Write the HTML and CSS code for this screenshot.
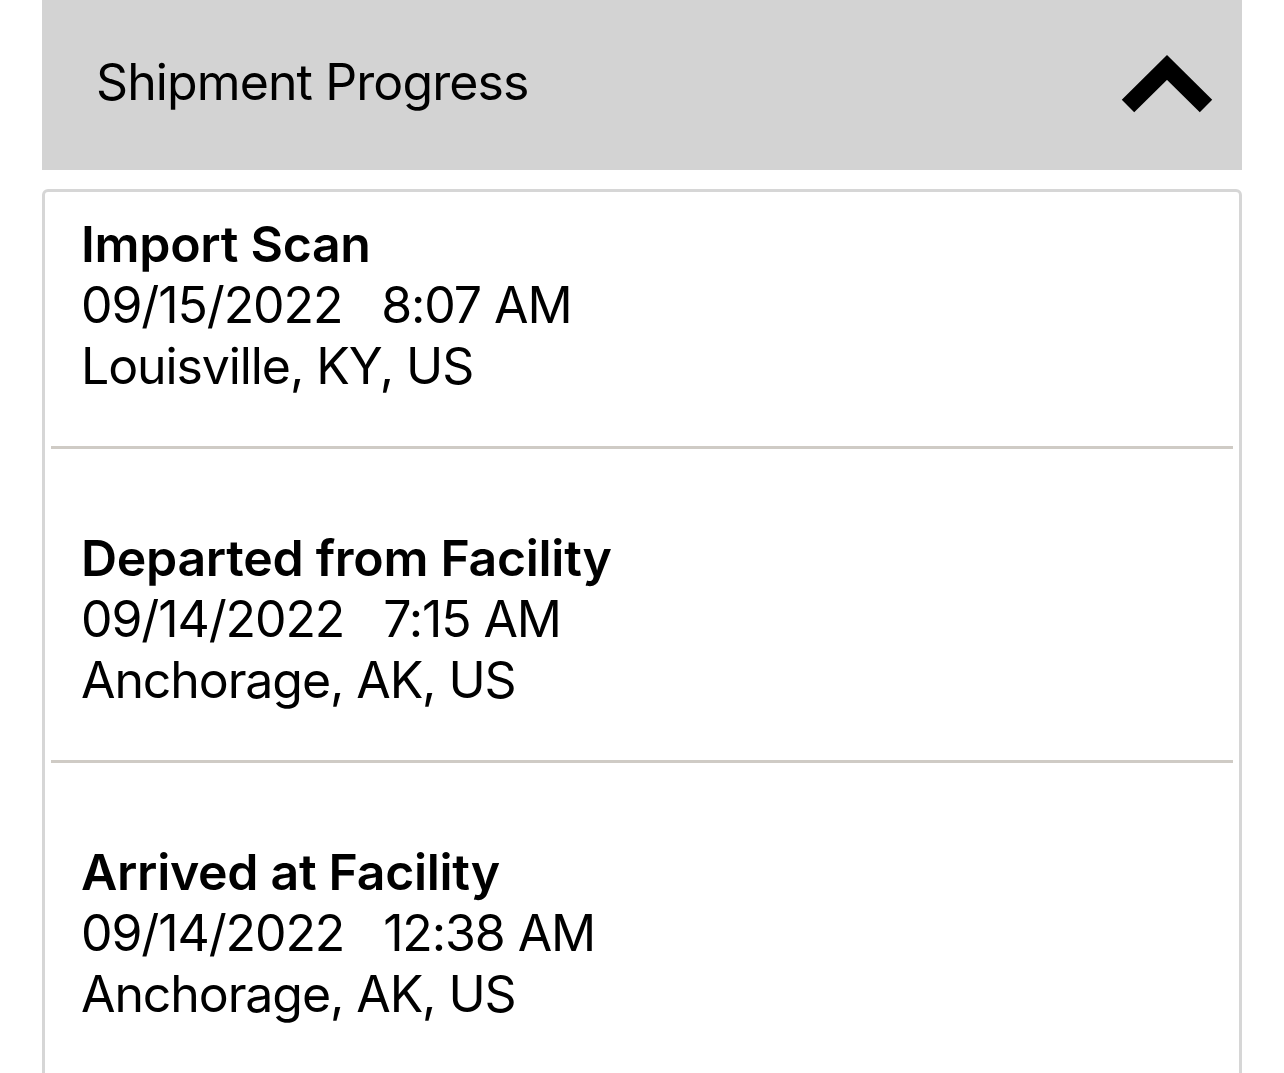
FILE: index.html
```html
<!DOCTYPE html>
<html lang="en">
<head>
<meta charset="utf-8">
<title>Shipment Progress</title>
<link rel="stylesheet" href="styles.css">
</head>
<body>
<div class="panel">
  <div class="panel-header">
    <span class="panel-title">Shipment Progress</span>
    <svg class="chevron" width="100" height="70" viewBox="0 0 100 70" aria-hidden="true">
      <polyline points="11,56 50,17.5 89,56" fill="none" stroke="#000" stroke-width="17.7" stroke-linejoin="miter" stroke-linecap="butt"/>
    </svg>
  </div>
  <div class="card">
    <div class="event first">
      <div class="event-title">Import Scan</div>
      <div class="event-line">09/15/2022   8:07 AM</div>
      <div class="event-line">Louisville, KY, US</div>
    </div>
    <div class="event">
      <div class="event-title">Departed from Facility</div>
      <div class="event-line">09/14/2022   7:15 AM</div>
      <div class="event-line">Anchorage, AK, US</div>
    </div>
    <div class="event">
      <div class="event-title">Arrived at Facility</div>
      <div class="event-line">09/14/2022   12:38 AM</div>
      <div class="event-line">Anchorage, AK, US</div>
    </div>
  </div>
</div>
</body>
</html>
```
FILE: styles.css
```css
html, body {
  margin: 0;
  padding: 0;
  background: #ffffff;
}
body {
  font-family: Inter, "Noto Sans", "Liberation Sans", sans-serif;
  color: #000;
  overflow: hidden;
  height: 1073px;
}
.panel {
  margin: 0 42px;
  width: 1200px;
}
.panel-header {
  height: 170px;
  background: #d3d3d3;
  display: flex;
  align-items: center;
  justify-content: space-between;
  padding: 0 25px 0 54px;
  box-sizing: border-box;
}
.panel-title {
  font-size: 50px;
  font-weight: 400;
  letter-spacing: -0.9px;
  line-height: 62px;
  margin-top: -6px;
}
.chevron {
  display: block;
  flex: none;
}
.card {
  margin-top: 19px;
  border: 3px solid #d6d6d6;
  border-radius: 6px;
  padding: 0 6px;
  min-height: 1000px;
}
.event {
  padding: 78px 0 49px 30px;
  border-bottom: 3px solid #cfcbc5;
}
.event.first {
  padding-top: 21px;
}
.event-title {
  font-size: 50px;
  font-weight: 600;
  line-height: 62px;
  letter-spacing: -0.3px;
}
.event-line {
  font-size: 50px;
  font-weight: 400;
  line-height: 61px;
  letter-spacing: -1.1px;
  white-space: pre;
}
```
